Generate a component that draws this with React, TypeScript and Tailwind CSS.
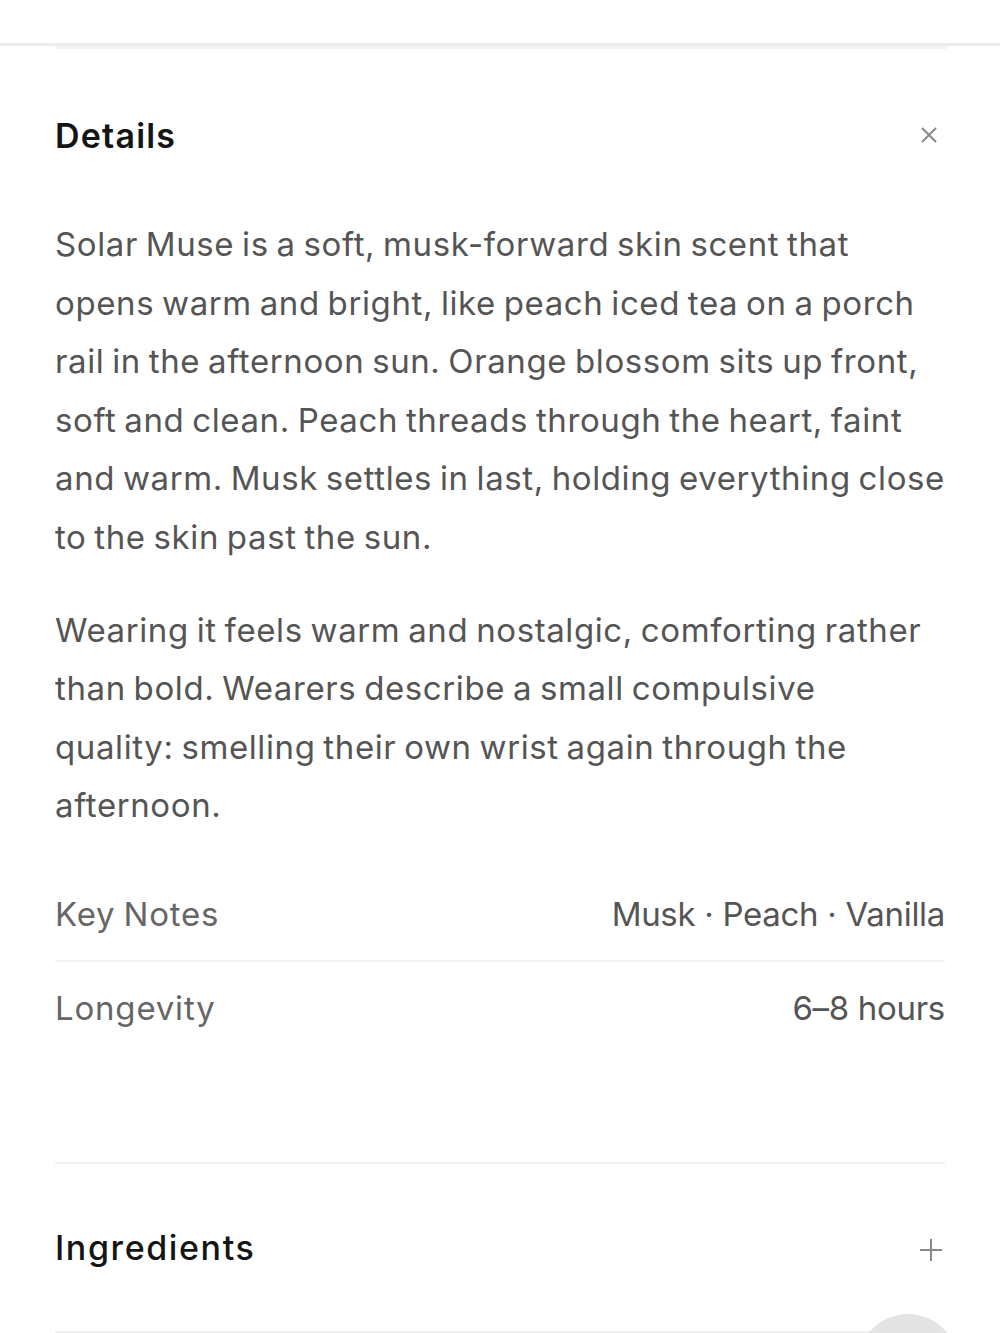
import React from 'react';

const FONT = { fontFamily: 'Inter, "Noto Sans", sans-serif' };

const PARA_1 = [
  'Solar Muse is a soft, musk-forward skin scent that',
  'opens warm and bright, like peach iced tea on a porch',
  'rail in the afternoon sun. Orange blossom sits up front,',
  'soft and clean. Peach threads through the heart, faint',
  'and warm. Musk settles in last, holding everything close',
  'to the skin past the sun.',
];

const PARA_2 = [
  'Wearing it feels warm and nostalgic, comforting rather',
  'than bold. Wearers describe a small compulsive',
  'quality: smelling their own wrist again through the',
  'afternoon.',
];

const Row: React.FC<{ label: string; value: string; border?: boolean }> = ({ label, value, border }) => (
  <div className={`flex items-center justify-between h-[93px] ${border ? 'border-b-2 border-[#f2f2f2]' : ''}`}>
    <span className="text-[33px] text-[#666] tracking-[0.8px] [word-spacing:-2px]">{label}</span>
    <span className="text-[33px] text-[#555] tracking-[-0.3px]">{value}</span>
  </div>
);

const Para: React.FC<{ lines: string[]; className?: string }> = ({ lines, className }) => (
  <p className={className}>
    {lines.map((l, i) => (
      <span key={i} className="block whitespace-nowrap">{l}</span>
    ))}
  </p>
);

export default function App() {
  return (
    <div className="relative w-[1000px] h-[1333px] overflow-hidden bg-white" style={FONT}>
      <div className="h-[43px]" />
      <div className="h-[3px] bg-[#ececec]" />
      <div className="px-[55px]">
        <div className="h-[3px] bg-[#f3f3f3] mr-[-2px]" />

        {/* Details */}
        <div className="flex items-center justify-between h-[172px]">
          <h2 className="text-[34px] font-semibold text-[#151515] tracking-[1.2px]">Details</h2>
          <svg width="20" height="20" viewBox="0 0 20 20" className="mr-[6px]">
            <path d="M3 3 L17 17 M17 3 L3 17" stroke="#8a8a8a" strokeWidth="2" />
          </svg>
        </div>

        <div className="text-[33px] leading-[58.6px] text-[#555] tracking-[0.6px] [word-spacing:-2px] mt-[-6px]">
          <Para lines={PARA_1} />
          <Para lines={PARA_2} className="mt-[34px]" />
        </div>

        <div className="mt-[34px]">
          <Row label="Key Notes" value="Musk · Peach · Vanilla" border />
          <Row label="Longevity" value="6–8 hours" />
        </div>

        <div className="h-[107px]" />
        <div className="h-[2px] bg-[#f0f0f0]" />

        {/* Ingredients */}
        <div className="flex items-center justify-between h-[167px]">
          <h2 className="text-[34px] font-medium text-[#151515] tracking-[1.6px]">Ingredients</h2>
          <svg width="24" height="24" viewBox="0 0 24 24" className="mr-[2px] mt-[6px]">
            <path d="M12 1 V23 M1 12 H23" stroke="#8a8a8a" strokeWidth="2" />
          </svg>
        </div>
        <div className="h-[2px] bg-[#f0f0f0]" />
      </div>

      <div className="absolute left-[858px] top-[1314px] w-[100px] h-[100px] rounded-full bg-[#e4e4e4]" />
    </div>
  );
}
